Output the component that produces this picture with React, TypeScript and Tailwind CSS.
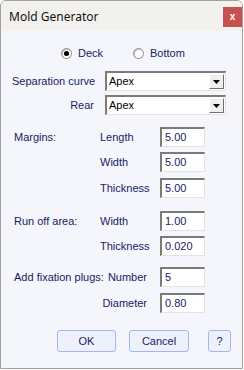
import React from "react";

const font = { fontFamily: '"Liberation Sans", Arial, sans-serif' };

function Radio({ checked, label }: { checked?: boolean; label: string }) {
  return (
    <div className="flex items-center gap-[6px]">
      <span className="w-[11px] h-[11px] rounded-full border border-[#8a8a8a] bg-white flex items-center justify-center shadow-[inset_1px_1px_0_#c8c8c8]">
        {checked && <span className="w-[5px] h-[5px] rounded-full bg-black" />}
      </span>
      <span className="text-[11px] text-[#1a1a66] leading-none">{label}</span>
    </div>
  );
}

function Select({ value }: { value: string }) {
  return (
    <div className="w-[121px] h-[20px] bg-white border-t-2 border-l-2 border-t-[#7a7a7a] border-l-[#7a7a7a] border-b border-r border-b-[#e3e3e3] border-r-[#e3e3e3] flex items-center justify-between pl-[2px] pr-[1px]">
      <span className="text-[11px] text-black">{value}</span>
      <span className="w-[15px] h-[15px] bg-[#efefef] border border-t-white border-l-white border-b-[#6f6f6f] border-r-[#6f6f6f] flex items-center justify-center">
        <svg width="7" height="4" viewBox="0 0 7 4">
          <path d="M0 0h7L3.5 4z" fill="#000" />
        </svg>
      </span>
    </div>
  );
}

function Field({ value }: { value: string }) {
  return (
    <div className="w-[45px] h-[20px] bg-white border-t-2 border-l-2 border-t-[#7a7a7a] border-l-[#7a7a7a] border-b border-r border-b-[#e3e3e3] border-r-[#e3e3e3] flex items-center pl-[3px]">
      <span className="text-[11px] text-[#1a1a66]">{value}</span>
    </div>
  );
}

function Row({
  section,
  label,
  value,
  right,
  className,
}: {
  section?: string;
  label: string;
  value: string;
  right?: boolean;
  className?: string;
}) {
  return (
    <div className={"flex items-center h-[20px] ml-[13px] " + (className || "")}>
      <span className="w-[86px] whitespace-nowrap text-[11px] text-[#1a1a66]">{section}</span>
      <span
        className={
          "w-[60px] whitespace-nowrap text-[11px] text-[#1a1a66] " + (right ? "text-right pr-[13px]" : "")
        }
      >
        {label}
      </span>
      <Field value={value} />
    </div>
  );
}

export default function App() {
  return (
    <div className="w-[244px] h-[370px] bg-white" style={font}>
      <div className="w-[243px] h-[369px] border border-[#a0a0a0] rounded-t-[6px] overflow-hidden flex flex-col bg-[#f4f6fb]">
        <div className="h-[30px] bg-[#f3f1ee] flex items-start justify-between flex-none">
          <span
            className="text-[12px] text-[#111] ml-[8px] mt-[7px]"
            style={{ fontFamily: '"Noto Sans", "Open Sans", sans-serif' }}
          >
            Mold Generator
          </span>
          <div className="w-[19px] h-[20px] mt-[6px] bg-[#c75050] flex items-center justify-center">
            <span className="text-white text-[10px] font-bold leading-none">x</span>
          </div>
        </div>

        <div className="flex items-center h-[16px] mt-[14px] pl-[60px]">
          <div className="w-[72px]">
            <Radio checked label="Deck" />
          </div>
          <Radio label="Bottom" />
        </div>

        <div className="flex items-center h-[20px] mt-[10px] ml-[11px]">
          <span className="w-[82px] text-right text-[11px] text-[#1a1a66] whitespace-nowrap">Separation curve</span>
          <div className="ml-[11px]">
            <Select value="Apex" />
          </div>
        </div>
        <div className="flex items-center h-[20px] mt-[4px] ml-[11px]">
          <span className="w-[82px] text-right text-[11px] text-[#1a1a66]">Rear</span>
          <div className="ml-[11px]">
            <Select value="Apex" />
          </div>
        </div>

        <Row className="mt-[12px]" section="Margins:" label="Length" value="5.00" />
        <Row className="mt-[5px]" label="Width" value="5.00" />
        <Row className="mt-[6px]" label="Thickness" value="5.00" />

        <Row className="mt-[13px]" section="Run off area:" label="Width" value="1.00" />
        <Row className="mt-[5px]" label="Thickness" value="0.020" />

        <Row className="mt-[11px]" section="Add fixation plugs:" label="Number" value="5" right />
        <Row className="mt-[6px]" label="Diameter" value="0.80" right />

        <div className="flex items-center mt-[17px] ml-[56px]">
          <button className="w-[59px] h-[22px] bg-[#edf1fb] border border-[#a3b6f2] rounded-[3px] text-[11px] text-[#1a1a66]">
            OK
          </button>
          <button className="w-[60px] h-[22px] ml-[13px] bg-[#edf1fb] border border-[#a3b6f2] rounded-[3px] text-[11px] text-[#1a1a66]">
            Cancel
          </button>
          <button className="w-[23px] h-[22px] ml-[19px] bg-[#edf1fb] border border-[#a3b6f2] rounded-[3px] text-[11px] text-[#1a1a66]">
            ?
          </button>
        </div>
      </div>
    </div>
  );
}
